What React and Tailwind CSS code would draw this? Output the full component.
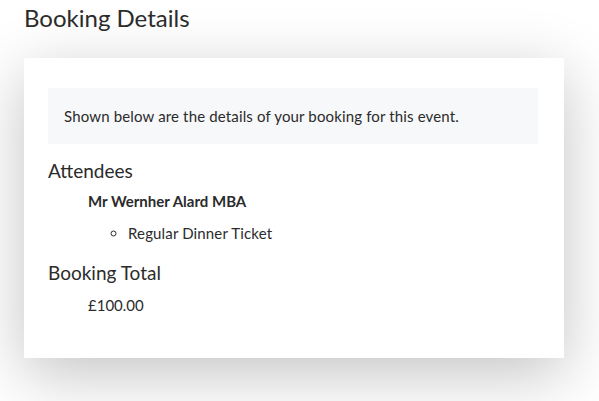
export default function App() {
  return (
    <div className="min-h-[401px] bg-white px-6 font-['Lato','Liberation_Sans',sans-serif] text-[#2b2b2b]">
      <h1 className="pt-[3px] text-[24px] leading-[30px] font-normal">Booking Details</h1>
      <section className="mt-[25px] w-[540px] bg-white pl-6 pr-[26px] pt-[30px] pb-[43px] shadow-[0_16px_60px_rgba(0,0,0,0.24)]">
        <div className="bg-[#f7f8fa] px-4 py-[18px] text-[15px] leading-[20px] tracking-[0.15px]">
          Shown below are the details of your booking for this event.
        </div>
        <h2 className="mt-[15px] text-[19px] leading-[24px]">Attendees</h2>
        <div className="pl-10">
          <p className="mt-[8px] text-[15px] leading-[20px] font-bold">Mr Wernher Alard MBA</p>
          <ul className="mt-[12px] list-[circle] pl-10 text-[15px] leading-[20px] tracking-[0.15px]">
            <li>Regular Dinner Ticket</li>
          </ul>
        </div>
        <h2 className="mt-[18px] text-[19px] leading-[24px]">Booking Total</h2>
        <p className="mt-[10px] pl-10 text-[15px] leading-[20px]">£100.00</p>
      </section>
    </div>
  );
}
